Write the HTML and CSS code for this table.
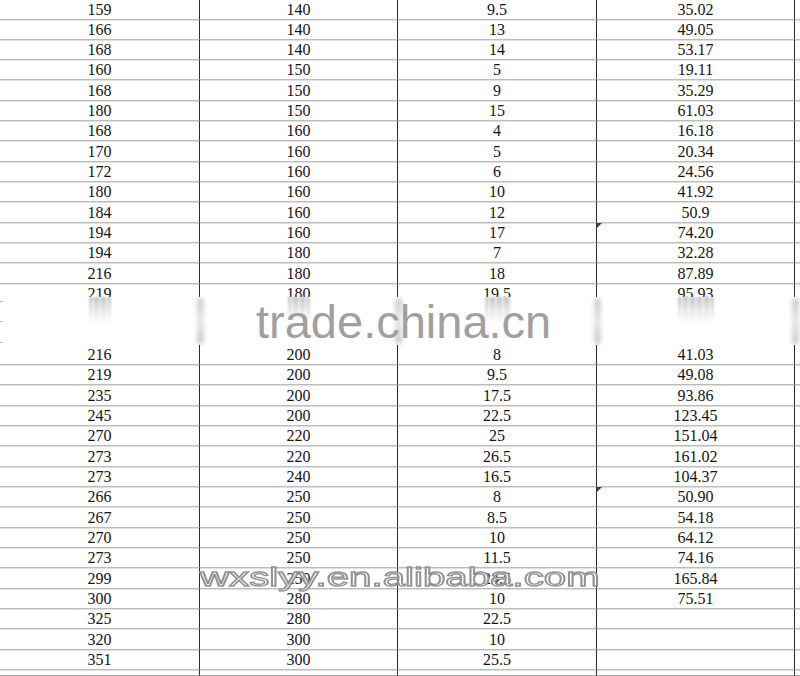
FILE: index.html
```html
<!DOCTYPE html>
<html>
<head>
<meta charset="utf-8">
<link rel="stylesheet" href="styles.css">
</head>
<body>
<div class="sheet">
  <div class="top">
    <div class="grid shift">
      <div class="c">159</div><div class="c">140</div><div class="c">9.5</div><div class="c">35.02</div><div class="c e"></div>
      <div class="c">166</div><div class="c">140</div><div class="c">13</div><div class="c">49.05</div><div class="c e"></div>
      <div class="c">168</div><div class="c">140</div><div class="c">14</div><div class="c">53.17</div><div class="c e"></div>
      <div class="c">160</div><div class="c">150</div><div class="c">5</div><div class="c">19.11</div><div class="c e"></div>
      <div class="c">168</div><div class="c">150</div><div class="c">9</div><div class="c">35.29</div><div class="c e"></div>
      <div class="c">180</div><div class="c">150</div><div class="c">15</div><div class="c">61.03</div><div class="c e"></div>
      <div class="c">168</div><div class="c">160</div><div class="c">4</div><div class="c">16.18</div><div class="c e"></div>
      <div class="c">170</div><div class="c">160</div><div class="c">5</div><div class="c">20.34</div><div class="c e"></div>
      <div class="c">172</div><div class="c">160</div><div class="c">6</div><div class="c">24.56</div><div class="c e"></div>
      <div class="c">180</div><div class="c">160</div><div class="c">10</div><div class="c">41.92</div><div class="c e"></div>
      <div class="c">184</div><div class="c">160</div><div class="c">12</div><div class="c">50.9</div><div class="c e"></div>
      <div class="c">194</div><div class="c">160</div><div class="c">17</div><div class="c flag">74.20</div><div class="c e"></div>
      <div class="c">194</div><div class="c">180</div><div class="c">7</div><div class="c">32.28</div><div class="c e"></div>
      <div class="c">216</div><div class="c">180</div><div class="c">18</div><div class="c">87.89</div><div class="c e"></div>
      <div class="c">219</div><div class="c">180</div><div class="c">19.5</div><div class="c">95.93</div><div class="c e"></div>
    </div>
  </div>

  <div class="grid splice">
    <div class="s">
      <div class="stubs"><i></i><i></i><i></i></div>
      <div class="smear w3"></div>
      <div class="blob"></div>
    </div>
    <div class="s">
      <div class="smear w3"></div>
      <div class="blob"></div>
    </div>
    <div class="s">
      <div class="smear w4"></div>
      <div class="blob"></div>
    </div>
    <div class="s">
      <div class="smear w5"></div>
      <div class="blob"></div>
    </div>
    <div class="s"></div>
  </div>

  <div class="grid bottom">
    <div class="c">216</div><div class="c">200</div><div class="c">8</div><div class="c">41.03</div><div class="c e"></div>
    <div class="c">219</div><div class="c">200</div><div class="c">9.5</div><div class="c">49.08</div><div class="c e"></div>
    <div class="c">235</div><div class="c">200</div><div class="c">17.5</div><div class="c">93.86</div><div class="c e"></div>
    <div class="c">245</div><div class="c">200</div><div class="c">22.5</div><div class="c">123.45</div><div class="c e"></div>
    <div class="c">270</div><div class="c">220</div><div class="c">25</div><div class="c">151.04</div><div class="c e"></div>
    <div class="c">273</div><div class="c">220</div><div class="c">26.5</div><div class="c">161.02</div><div class="c e"></div>
    <div class="c">273</div><div class="c">240</div><div class="c">16.5</div><div class="c">104.37</div><div class="c e"></div>
    <div class="c">266</div><div class="c">250</div><div class="c">8</div><div class="c flag">50.90</div><div class="c e"></div>
    <div class="c">267</div><div class="c">250</div><div class="c">8.5</div><div class="c">54.18</div><div class="c e"></div>
    <div class="c">270</div><div class="c">250</div><div class="c">10</div><div class="c">64.12</div><div class="c e"></div>
    <div class="c">273</div><div class="c">250</div><div class="c">11.5</div><div class="c">74.16</div><div class="c e"></div>
    <div class="c">299</div><div class="c">250</div><div class="c">24.5</div><div class="c">165.84</div><div class="c e"></div>
    <div class="c">300</div><div class="c">280</div><div class="c">10</div><div class="c">75.51</div><div class="c e"></div>
    <div class="c">325</div><div class="c">280</div><div class="c">22.5</div><div class="c"></div><div class="c e"></div>
    <div class="c">320</div><div class="c">300</div><div class="c">10</div><div class="c"></div><div class="c e"></div>
    <div class="c">351</div><div class="c">300</div><div class="c">25.5</div><div class="c"></div><div class="c e"></div>
    <div class="c tail"></div><div class="c tail"></div><div class="c tail"></div><div class="c tail"></div><div class="c e tail"></div>
  </div>

  <div class="wm wm-trade">trade.china.cn</div>
  <div class="wm wm-ali">wxslyy.en.alibaba.com</div>
</div>
</body>
</html>
```

FILE: styles.css
```css
html, body {
  margin: 0;
  padding: 0;
  background: #ffffff;
}

body {
  width: 800px;
  height: 676px;
  overflow: hidden;
  font-family: "Liberation Serif", "Times New Roman", serif;
}

.sheet {
  position: relative;
  width: 800px;
  height: 676px;
  overflow: hidden;
}

.grid {
  display: grid;
  grid-template-columns: 200px 198px 199px 198px 1fr;
  grid-auto-rows: 20.333px;
}

.top {
  height: 297px;
  overflow: hidden;
}

.shift {
  margin-top: -0.833px;
}

.c {
  box-sizing: border-box;
  position: relative;
  display: flex;
  align-items: flex-end;
  justify-content: center;
  border-right: 1px solid #2c2c2c;
  border-bottom: 1px solid #bcbcbc;
  box-shadow: 0 1px 0 #e0e0e0;
  font-size: 16px;
  line-height: 18px;
  color: #141414;
}

.c.e {
  border-right: none;
}

.c.tail {
  border-bottom: 1px solid #a8a8a8;
  box-shadow: none;
}

.bottom {
  grid-template-rows: repeat(16, 20.333px) 5.9px;
}

.flag::before {
  content: "";
  position: absolute;
  left: 0;
  top: 0;
  width: 0;
  height: 0;
  border-top: 5px solid #1f5f2a;
  border-right: 5px solid transparent;
}

/* spliced band between the two parts of the sheet */
.splice {
  grid-template-rows: 47.8px;
}

.s {
  display: grid;
  grid-template-columns: 1fr auto 1fr;
  position: relative;
}

.stubs {
  grid-column: 1;
  justify-self: start;
  display: flex;
  flex-direction: column;
  justify-content: space-between;
  padding: 4px 0 2px;
}

.stubs i {
  display: block;
  width: 3px;
  height: 1px;
  background: #b8b8b8;
}

.smear {
  grid-column: 2;
  align-self: start;
  height: 26px;
  background:
    repeating-linear-gradient(to right, rgba(255,255,255,0) 0 3px, rgba(255,255,255,0.55) 3px 5px, rgba(255,255,255,0) 5px 7px),
    linear-gradient(to bottom, rgba(150,150,150,0.55), rgba(190,190,190,0.35) 55%, rgba(230,230,230,0));
  filter: blur(1px);
}

.smear.w3 { width: 22px; margin-left: -1px; }
.smear.w4 { width: 26px; }
.smear.w5 { width: 36px; }

.blob {
  grid-column: 3;
  justify-self: end;
  align-self: center;
  width: 7px;
  height: 46px;
  margin-right: -4px;
  border-radius: 4px;
  background: linear-gradient(to bottom, #c8c8c8, #e6e6e6 50%, #c8c8c8);
  filter: blur(2px);
}

/* watermarks overlaid on the picture */
.wm {
  position: absolute;
  font-family: "Liberation Sans", Arial, sans-serif;
  line-height: 1;
  white-space: nowrap;
  pointer-events: none;
}

.wm-trade {
  left: 256px;
  top: 298px;
  font-size: 47px;
  color: #a0a0a0;
}

.wm-ali {
  left: 200px;
  top: 565px;
  font-size: 25px;
  color: rgba(255, 255, 255, 0.7);
  -webkit-text-stroke: 1.3px #929292;
  transform: scaleX(1.61);
  transform-origin: left top;
}
```
